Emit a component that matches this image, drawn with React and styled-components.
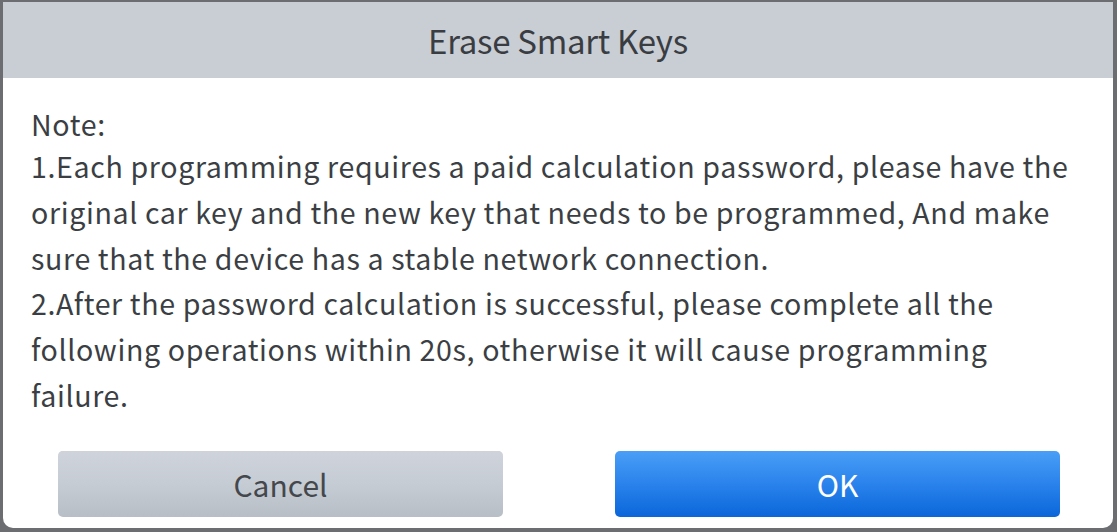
import React from 'react';
import styled, { createGlobalStyle } from 'styled-components';

const GlobalStyle = createGlobalStyle`
  html, body {
    margin: 0;
    padding: 0;
    background: #6b6d70;
  }
  body {
    font-family: "Noto Sans CJK SC", "Noto Sans", sans-serif;
  }
`;

const Screen = styled.div`
  width: 1117px;
  height: 532px;
  box-sizing: border-box;
  padding: 2px 4px 4px 3px;
  background: #6b6d70;
  overflow: hidden;
`;

const Dialog = styled.div`
  height: 100%;
  display: flex;
  flex-direction: column;
  background: #ffffff;
  border-radius: 0 0 10px 10px;
  overflow: hidden;
`;

const Header = styled.div`
  height: 76px;
  flex-shrink: 0;
  display: flex;
  align-items: center;
  justify-content: center;
  background: #c9cdd4;
  color: #393d42;
  font-size: 33px;
  letter-spacing: -0.3px;
`;

const Body = styled.div`
  flex: 1;
  padding: 26px 30px 0 28px;
  color: #3b3f44;
  font-size: 28.6px;
  line-height: 45.8px;
  letter-spacing: 0.62px;
`;

const NoteLabel = styled.p`
  margin: 0;
  line-height: 39px;
`;

const Line = styled.p`
  margin: 0;
`;

const Footer = styled.div`
  display: grid;
  grid-template-columns: 445px 445px;
  justify-content: space-between;
  padding: 0 53px 11px 55px;
`;

const Button = styled.button`
  height: 66px;
  border: none;
  border-radius: 5px;
  font-family: inherit;
  font-size: 30px;
  color: ${p => (p.$primary ? '#ffffff' : '#44484d')};
  background: ${p =>
    p.$primary
      ? 'linear-gradient(to bottom, #4a9ef6 0%, #2a83ec 50%, #0a66d9 100%)'
      : 'linear-gradient(to bottom, #cfd4dc 0%, #c6ccd4 50%, #b8bec6 100%)'};
  box-shadow: ${p => (p.$primary ? 'none' : 'inset 0 1px 0 #d0d2d6')};
`;

export default function App() {
  return (
    <>
      <GlobalStyle />
      <Screen>
        <Dialog>
          <Header>Erase Smart Keys</Header>
          <Body>
            <NoteLabel>Note:</NoteLabel>
            <Line>
              1.Each programming requires a paid calculation password, please have the
              original car key and the new key that needs to be programmed, And make
              sure that the device has a stable network connection.
            </Line>
            <Line>
              2.After the password calculation is successful, please complete all the
              following operations within 20s, otherwise it will cause programming
              failure.
            </Line>
          </Body>
          <Footer>
            <Button>Cancel</Button>
            <Button $primary>OK</Button>
          </Footer>
        </Dialog>
      </Screen>
    </>
  );
}
